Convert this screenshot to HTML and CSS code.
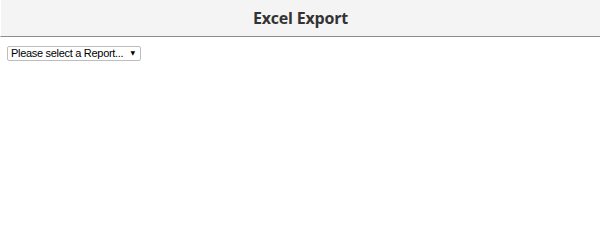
FILE: index.html
```html
<!DOCTYPE html>
<html>
<head>
<meta charset="utf-8">
<link rel="stylesheet" href="styles.css">
</head>
<body>
<header class="header"><h1 class="title">Excel Export</h1></header>
<main class="content">
<div class="select-wrap">
<select class="report-select">
<option>Please select a Report...</option>
</select>
<span class="select-arrow">&#9660;</span>
</div>
</main>
</body>
</html>
```
FILE: styles.css
```css
html, body { margin: 0; padding: 0; background: #fff; }
body { width: 600px; height: 203px; overflow: hidden; }
.header {
  height: 36px;
  background: #f4f4f4;
  border-bottom: 1px solid #8c8c8c;
  border-left: 1px solid #fff;
  display: flex;
  align-items: center;
  justify-content: center;
}
.title {
  margin: 0;
  font-family: "Open Sans", sans-serif;
  font-weight: 700;
  font-size: 16px;
  letter-spacing: -0.2px;
  color: #333;
}
.content { padding: 9px 7px; }
.select-wrap {
  position: relative;
  width: 134px;
  height: 15px;
}
.report-select {
  -webkit-appearance: none;
  appearance: none;
  box-sizing: border-box;
  font-family: "Liberation Sans", Arial, sans-serif;
  font-size: 11px;
  letter-spacing: -0.3px;
  line-height: 13px;
  height: 15px;
  width: 134px;
  padding: 0 14px 0 3px;
  margin: 0;
  border: 1px solid #bdbdbd;
  border-radius: 2px;
  background: #fff;
  color: #000;
  display: block;
  outline: none;
}
.select-arrow {
  position: absolute;
  right: 6px;
  top: 3px;
  font-family: "DejaVu Sans", sans-serif;
  font-size: 6px;
  line-height: 8px;
  color: #000;
  pointer-events: none;
}
```
